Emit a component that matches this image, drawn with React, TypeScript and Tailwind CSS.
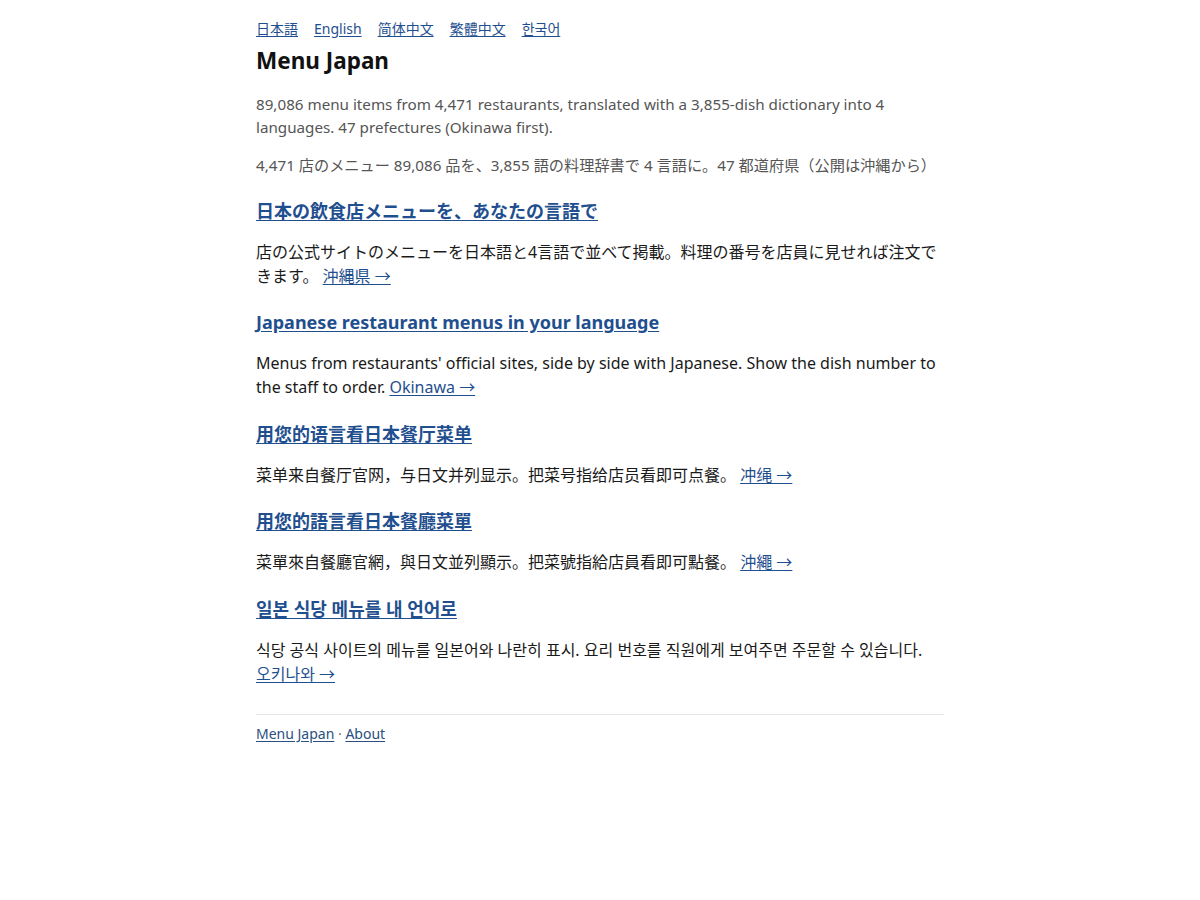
const langs = ['日本語', 'English', '简体中文', '繁體中文', '한국어'];

const sections = [
  {
    title: '日本の飲食店メニューを、あなたの言語で',
    body: '店の公式サイトのメニューを日本語と4言語で並べて掲載。料理の番号を店員に見せれば注文できます。',
    link: '沖縄県 →',
  },
  {
    title: 'Japanese restaurant menus in your language',
    body: "Menus from restaurants' official sites, side by side with Japanese. Show the dish number to the staff to order.",
    link: 'Okinawa →',
  },
  {
    title: '用您的语言看日本餐厅菜单',
    body: '菜单来自餐厅官网，与日文并列显示。把菜号指给店员看即可点餐。',
    link: '冲绳 →',
  },
  {
    title: '用您的語言看日本餐廳菜單',
    body: '菜單來自餐廳官網，與日文並列顯示。把菜號指給店員看即可點餐。',
    link: '沖繩 →',
  },
  {
    title: '일본 식당 메뉴를 내 언어로',
    body: '식당 공식 사이트의 메뉴를 일본어와 나란히 표시. 요리 번호를 직원에게 보여주면 주문할 수 있습니다.',
    link: '오키나와 →',
  },
];

export default function App() {
  return (
    <div className="min-h-screen bg-white font-['Noto_Sans','Noto_Sans_CJK_JP',sans-serif] text-[#111]">
      <div className="mx-auto max-w-[720px] px-4 pt-[17px] pb-10">
        <nav className="flex gap-4 text-sm leading-6">
          {langs.map((l) => (
            <a key={l} href="#" className="text-[#1f4f8f] underline underline-offset-2">
              {l}
            </a>
          ))}
        </nav>

        <h1 className="mt-[5px] text-[22.5px] font-bold leading-[30px]">Menu Japan</h1>

        <p className="mt-[17px] text-[15.2px] leading-[23px] text-[#555]">
          89,086 menu items from 4,471 restaurants, translated with a 3,855-dish dictionary into 4
          languages. 47 prefectures (Okinawa first).
        </p>
        <p className="mt-[15px] text-[15.2px] leading-[23px] text-[#555]">
          4,471 店のメニュー 89,086 品を、3,855 語の料理辞書で 4 言語に。47 都道府県（公開は沖縄から）
        </p>

        <div className="-mt-px">
          {sections.map((s) => (
            <section key={s.title}>
              <h2 className="mt-[21.5px] text-lg font-bold leading-[27px]">
                <a href="#" className="text-[#1f4f8f] underline underline-offset-2">
                  {s.title}
                </a>
              </h2>
              <p className="mt-[15px] text-base leading-6 text-[#1a1a1a]">
                {s.body}{' '}
                <a href="#" className="whitespace-nowrap text-[#1f4f8f] underline underline-offset-2">
                  {s.link}
                </a>
              </p>
            </section>
          ))}
        </div>

        <footer className="mt-[28px] border-t border-[#e5e5e5] pt-[9px] text-sm leading-5 text-[#777]">
          <a href="#" className="text-[#2a4f80] underline underline-offset-2">
            Menu Japan
          </a>
          {' · '}
          <a href="#" className="text-[#2a4f80] underline underline-offset-2">
            About
          </a>
        </footer>
      </div>
    </div>
  );
}
